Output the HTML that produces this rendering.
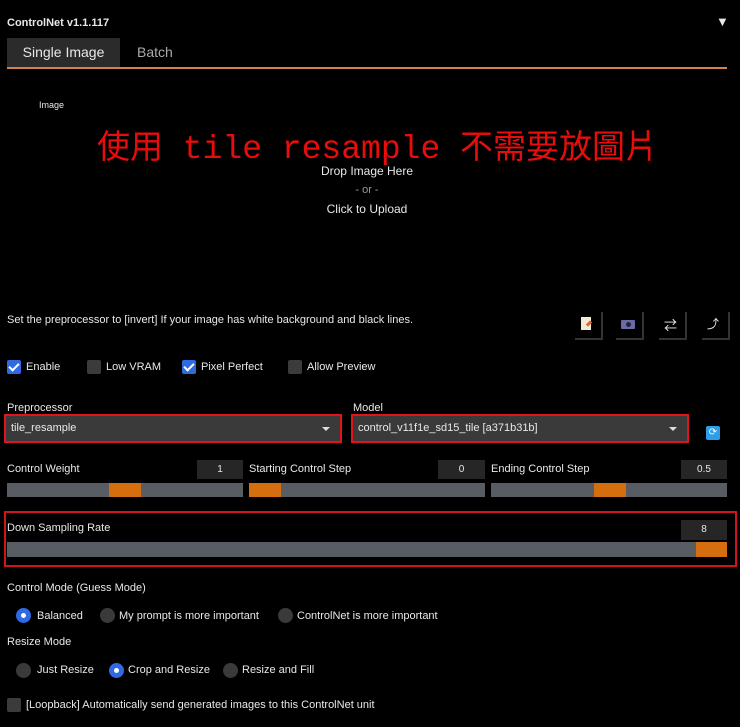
<!DOCTYPE html>
<html><head><meta charset="utf-8"><style>
*{margin:0;padding:0;box-sizing:border-box}
body{width:740px;height:727px;background:#000;color:#e8e8e8;font-family:"Liberation Sans","Noto Sans CJK TC",sans-serif;font-size:11px;position:relative;overflow:hidden}
.a{position:absolute;white-space:nowrap}
.t{line-height:14px}
.cb{position:absolute;width:14px;height:14px;background:#3b3b3b;border-radius:2px}
.cb.on{background:#2f6ae0}
.cb.on::after{content:"";position:absolute;left:4px;top:1px;width:4px;height:8px;border:solid #fff;border-width:0 2px 2px 0;transform:rotate(45deg)}
.dd{position:absolute;background:#3a3a3a;border:2px solid #e0141b;outline:0;padding-left:5px;line-height:25px;font-size:11px}
.dd::after{content:"";position:absolute;right:10px;top:11px;border:4px solid transparent;border-top:4px solid #ddd}
.num{position:absolute;background:#262626;text-align:center;line-height:19px;font-size:10px;height:19px}
.tr{position:absolute;background:#575d63;height:14px}
.th{position:absolute;background:#d56e0f;height:14px;top:0}
.rd{position:absolute;width:15px;height:15px;border-radius:50%;background:#3a3a3a}
.rd.on{background:#2f6ae0}
.rd.on::after{content:"";position:absolute;left:5px;top:5px;width:5px;height:5px;border-radius:50%;background:#fff}
.ib{position:absolute;width:28px;height:28px;box-shadow:2px 2px 0 #333;}
</style></head><body>
<div class="a t" style="left:7px;top:16px;font-size:11px;font-weight:bold">ControlNet v1.1.117</div>
<div class="a" style="left:716px;top:14px;font-size:13px">▼</div>
<div class="a" style="left:7px;top:38px;width:113px;height:29px;background:#2b2b2b;font-size:14px;line-height:29px;text-align:center">Single Image</div>
<div class="a" style="left:137px;top:38px;font-size:14px;line-height:29px;color:#aaa">Batch</div>
<div class="a" style="left:7px;top:67px;width:720px;height:2px;background:#d0824a"></div>
<div class="a t" style="left:39px;top:98px;font-size:9px">Image</div>
<div class="a" style="left:97px;top:128px;font-family:'Liberation Mono','Noto Sans CJK TC',monospace;font-size:33px;line-height:44px;color:#e80c0c">使用 tile resample 不需要放圖片</div>
<div class="a" style="left:0;width:734px;top:164px;text-align:center;font-size:12px;line-height:15px">Drop Image Here</div>
<div class="a" style="left:0;width:734px;top:183px;text-align:center;font-size:11px;line-height:15px;color:#999">- or -</div>
<div class="a" style="left:0;width:734px;top:202px;text-align:center;font-size:12px;line-height:15px">Click to Upload</div>
<div class="a t" style="left:7px;top:313px">Set the preprocessor to [invert] If your image has white background and black lines.</div>
<div class="ib" style="left:573px;top:310px"><div class="a" style="left:8px;top:7px;width:10px;height:13px;background:#f4ead8"></div><div class="a" style="left:13px;top:12px;width:6px;height:3px;background:#e8622a;transform:rotate(-45deg)"></div></div>
<div class="ib" style="left:614px;top:310px"><div class="a" style="left:7px;top:10px;width:14px;height:9px;background:#6a6aa8;border-radius:1px"></div><div class="a" style="left:12px;top:12px;width:5px;height:5px;border-radius:50%;background:#223"></div></div>
<div class="ib" style="left:657px;top:310px"><div class="a" style="left:7px;top:5px;font-size:13px;color:#eee">⇄</div></div>
<div class="ib" style="left:700px;top:310px"><div class="a" style="left:7px;top:5px;font-size:12px;color:#eee">⤴</div></div>
<div class="cb on" style="left:7px;top:360px"></div><div class="a t" style="left:26px;top:360px">Enable</div>
<div class="cb" style="left:87px;top:360px"></div><div class="a t" style="left:106px;top:360px">Low VRAM</div>
<div class="cb on" style="left:182px;top:360px"></div><div class="a t" style="left:201px;top:360px">Pixel Perfect</div>
<div class="cb" style="left:288px;top:360px"></div><div class="a t" style="left:307px;top:360px">Allow Preview</div>
<div class="a t" style="left:7px;top:401px">Preprocessor</div>
<div class="dd" style="left:4px;top:414px;width:338px;height:29px">tile_resample</div>
<div class="a t" style="left:353px;top:401px">Model</div>
<div class="dd" style="left:351px;top:414px;width:338px;height:29px">control_v11f1e_sd15_tile [a371b31b]</div>
<div class="a" style="left:706px;top:426px;width:14px;height:14px;background:#2e9ee8;border-radius:2px;color:#fff;font-size:10px;line-height:14px;text-align:center">⟳</div>
<div class="a t" style="left:7px;top:462px">Control Weight</div>
<div class="num" style="left:197px;top:460px;width:46px">1</div>
<div class="tr" style="left:7px;top:483px;width:236px"><div class="th" style="left:102px;width:32px"></div></div>
<div class="a t" style="left:249px;top:462px">Starting Control Step</div>
<div class="num" style="left:438px;top:460px;width:47px">0</div>
<div class="tr" style="left:249px;top:483px;width:236px"><div class="th" style="left:0;width:32px"></div></div>
<div class="a t" style="left:491px;top:462px">Ending Control Step</div>
<div class="num" style="left:681px;top:460px;width:46px">0.5</div>
<div class="tr" style="left:491px;top:483px;width:236px"><div class="th" style="left:103px;width:32px"></div></div>
<div class="a" style="left:4px;top:511px;width:733px;height:56px;border:2px solid #d0141b"></div>
<div class="a t" style="left:7px;top:521px">Down Sampling Rate</div>
<div class="num" style="left:681px;top:520px;width:46px;height:20px">8</div>
<div class="tr" style="left:7px;top:542px;width:720px;height:15px"><div class="th" style="left:689px;width:31px;height:15px"></div></div>
<div class="a t" style="left:7px;top:581px">Control Mode (Guess Mode)</div>
<div class="rd on" style="left:16px;top:608px"></div><div class="a t" style="left:37px;top:609px">Balanced</div>
<div class="rd" style="left:100px;top:608px"></div><div class="a t" style="left:119px;top:609px">My prompt is more important</div>
<div class="rd" style="left:278px;top:608px"></div><div class="a t" style="left:297px;top:609px">ControlNet is more important</div>
<div class="a t" style="left:7px;top:635px">Resize Mode</div>
<div class="rd" style="left:16px;top:663px"></div><div class="a t" style="left:37px;top:663px">Just Resize</div>
<div class="rd on" style="left:109px;top:663px"></div><div class="a t" style="left:128px;top:663px">Crop and Resize</div>
<div class="rd" style="left:223px;top:663px"></div><div class="a t" style="left:242px;top:663px">Resize and Fill</div>
<div class="cb" style="left:7px;top:698px"></div><div class="a t" style="left:26px;top:698px">[Loopback] Automatically send generated images to this ControlNet unit</div>
</body></html>
